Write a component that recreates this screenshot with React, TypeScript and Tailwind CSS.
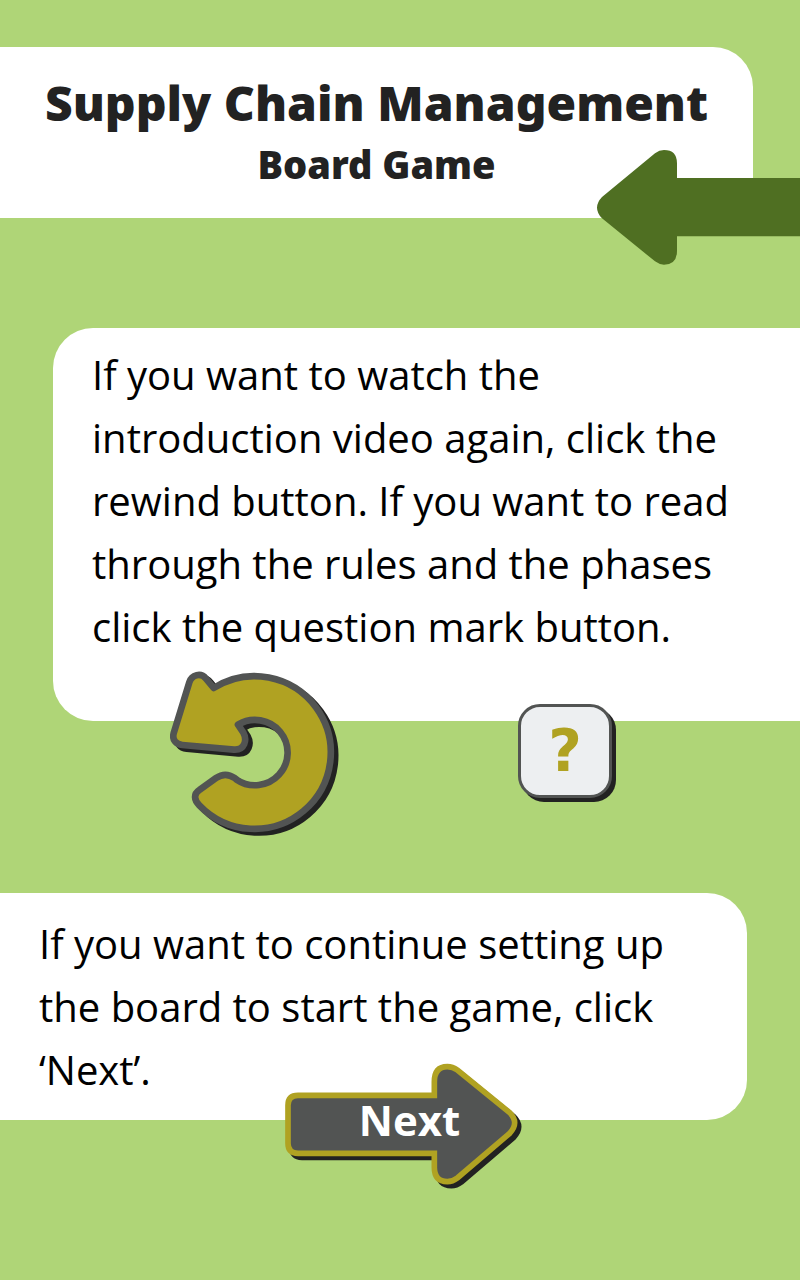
function BackArrow() {
  return (
    <svg viewBox="591 360 609 345" className="block h-[115px] w-[203px]" aria-hidden="true">
      <path
        fill="#4f6f22"
        d="M1200 444H831V400Q831 360 792 360Q778 360 765 370L606 501Q576 533 606 565L765 694Q778 704 792 704Q831 704 831 662V619H1200Z"
      />
    </svg>
  );
}

const rewindPath =
  "M191 114A229 229 0 1 1 148 466C132 450 130 432 148 420L198 384Q226 365 254 384L260 389A98 98 0 1 0 264 224L280 248C292 270 284 301 252 299L97 285C77 283 66 269 71 250L118 97C125 74 153 67 168 86Z";

function RewindIcon() {
  return (
    <svg viewBox="60 60 510 501" className="block h-[167px] w-[170px]" aria-hidden="true">
      <path d={rewindPath} transform="translate(13 11)" fill="#222222" stroke="#222222" strokeWidth="20" strokeLinejoin="round" />
      <path d={rewindPath} fill="#b0a222" stroke="#525453" strokeWidth="20" strokeLinejoin="round" />
    </svg>
  );
}

const nextPath =
  "M84 136H493V96Q493 50 532 50Q548 50 562 60L718 187Q750 218 718 251L562 384Q548 395 532 395Q493 395 493 352V310H84Q54 310 54 280V166Q54 136 84 136Z";

function NextShape() {
  return (
    <svg viewBox="42 39 717 378" className="col-start-1 row-start-1 block h-[126px] w-[239px]" aria-hidden="true">
      <path d={nextPath} transform="translate(12 12)" fill="#222222" stroke="#222222" strokeWidth="17" />
      <path d={nextPath} fill="#525453" stroke="#b0a222" strokeWidth="17" />
    </svg>
  );
}

export default function App() {
  return (
    <main className="flex min-h-screen flex-col bg-[#afd577] pt-[47px] font-['Open_Sans',sans-serif] text-black">
      <header className="relative">
        <div className="mr-[47px] rounded-tr-[40px] bg-white px-8 pt-6 pb-6 text-center font-['Noto_Sans',sans-serif] font-black text-[#222222]">
          <h1 className="text-[48px] leading-[64px]">Supply Chain Management</h1>
          <p className="text-[38px] leading-[59px]">Board Game</p>
        </div>
        <button type="button" aria-label="Back" className="absolute top-[103px] right-0 cursor-pointer">
          <BackArrow />
        </button>
      </header>

      <section className="mt-[110px] ml-[53px] rounded-l-[40px] bg-white pt-[15px] pr-8 pb-[63px] pl-[39px]">
        <p className="text-[40px] leading-[63px]">
          If you want to watch the
          <br />
          introduction video again, click the
          <br />
          rewind button. If you want to read
          <br />
          through the rules and the phases
          <br />
          click the question mark button.
        </p>
      </section>

      <div className="relative -mt-[51px] flex items-start gap-[178px] pl-[170px]">
        <button type="button" aria-label="Rewind" className="cursor-pointer">
          <RewindIcon />
        </button>
        <button
          type="button"
          aria-label="Rules"
          className="mt-[34px] grid size-[94px] cursor-pointer place-items-center rounded-[22px] border-[3px] border-[#525453] bg-[#edeff1] font-['DejaVu_Sans',sans-serif] text-[58px] leading-none font-bold text-[#b0a222] shadow-[4px_4px_0_#222222]"
        >
          ?
        </button>
      </div>

      <section className="mt-14 mr-[53px] rounded-r-[40px] bg-white pt-[19px] pr-8 pb-[19px] pl-[39px]">
        <p className="text-[40px] leading-[63px]">
          If you want to continue setting up
          <br />
          the board to start the game, click
          <br />
          ‘Next’.
        </p>
      </section>

      <button type="button" className="relative -mt-[57px] ml-[284px] grid cursor-pointer place-items-center self-start">
        <NextShape />
        <span className="col-start-1 row-start-1 pb-3 pl-3 text-[42px] leading-none font-bold text-white">Next</span>
      </button>
    </main>
  );
}
